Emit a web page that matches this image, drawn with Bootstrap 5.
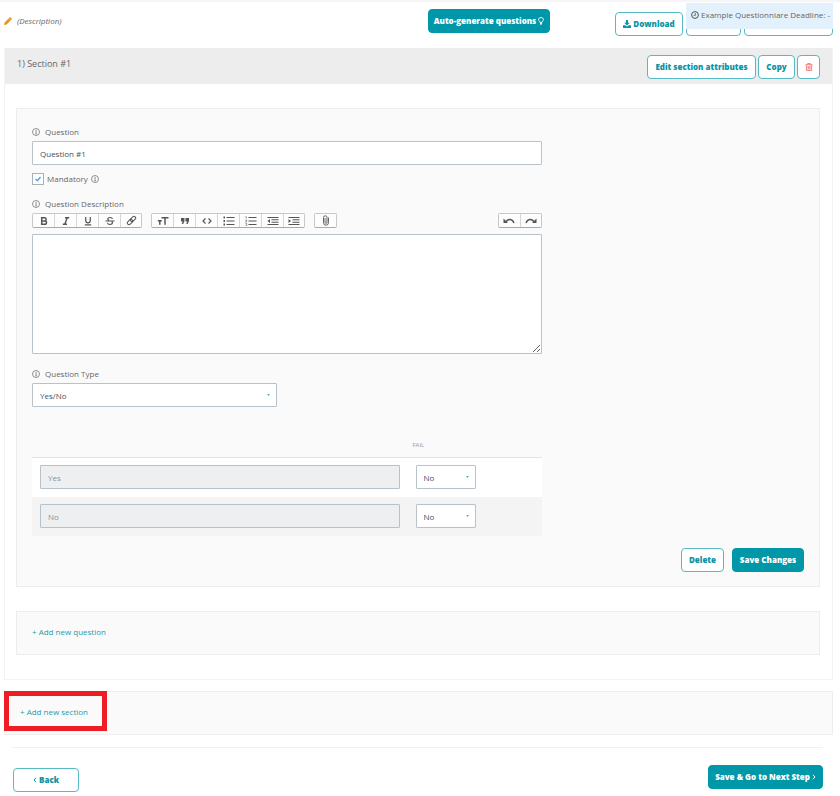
<!DOCTYPE html>
<html lang="en">
<head>
<meta charset="utf-8">
<meta name="viewport" content="width=device-width, initial-scale=1">
<title>Questionnaire editor</title>
<link href="https://cdn.jsdelivr.net/npm/bootstrap@5.3.0/dist/css/bootstrap.min.css" rel="stylesheet">
<style>
  :root { --teal: #0097a9; --field: #b8c2ca; --edge: #ededed; }
  body { font-family: "Open Sans", sans-serif; font-size: 8px; line-height: 12px; color: #555; background: #fff; border-top: 2px solid #f5f5f5; }
  svg { display: block; flex: none; }
  .page { padding: 0 7px 0 4px; }
  .page-head { height: 46px; padding-top: 7px; }
  .desc { height: 24px; padding-left: 0; gap: 5px; font-style: italic; color: #666; }
  .btn { --bs-btn-font-size: 8px; --bs-btn-line-height: 12px; --bs-btn-font-weight: 800; --bs-btn-border-radius: 4px; --bs-btn-padding-x: 7px; --bs-btn-padding-y: 0; height: 24px; display: inline-flex; align-items: center; justify-content: center; gap: 2px; white-space: nowrap; }
  .btn-teal { --bs-btn-color: #fff; --bs-btn-bg: var(--teal); --bs-btn-border-color: var(--teal); --bs-btn-hover-color: #fff; --bs-btn-hover-bg: #00808f; padding-left: 4px; padding-right: 4px; }
  .btn-line { --bs-btn-color: #0a94a5; --bs-btn-bg: #fff; --bs-btn-border-color: #55bac6; --bs-btn-hover-color: #fff; --bs-btn-hover-bg: var(--teal); }
  .w-auto-gen { width: 122px; margin-right: 65px; }
  .head-actions { gap: 3px; margin-top: 3px; }
  .w-dl { width: 68px; } .w-mid { width: 55px; } .w-wide { width: 89px; }
  .deadline { top: -9px; right: 0; width: 147px; height: 26px; background: #e3f1fd; gap: 2px; padding: 0 5px 2px; color: #666; white-space: nowrap; }
  .section-box { border: 1px solid #f3f3f3; border-top: 0; }
  .section-head { height: 36px; background: #ededed; padding: 0 12px; }
  .section-title { font-size: 9px; font-weight: 400; line-height: 12px; padding-top: 10px; color: #666; margin: 0; }
  .section-actions { gap: 2px; padding-top: 7px; }
  .w-edit { width: 109px; } .w-copy { width: 37px; } .w-bin { width: 23px; padding: 0; }
  .section-body { padding: 24px 12px 24px 11px; }
  .panel { background: #fafafa; border: 1px solid var(--edge); }
  .question { padding: 17px 15px 14px; }
  .fields { width: 66%; }
  .lbl { display: flex; align-items: center; gap: 5px; height: 12px; margin-bottom: 3px; color: #666; }
  .form-control, .form-select { font-size: 8px; line-height: 12px; height: 24px; padding: 1px 7px 0; border: 1px solid var(--field); border-radius: 1px; color: #44515c; background-color: #fff; }
  .form-control:disabled { background: #eeeff1; color: #8a929b; }
  .form-select { background-image: url("data:image/svg+xml,%3csvg xmlns='http://www.w3.org/2000/svg' viewBox='0 0 4 3'%3e%3cpath fill='%2339b0bd' d='M0 0h4L2 3z'/%3e%3c/svg%3e"); background-size: 3px 2px; background-position: right 6px center; padding-top: 2px; }
  .mand { gap: 3px; height: 12px; margin: 8px 0 13px; color: #666; }
  .form-check-input.tick { width: 12px; height: 12px; margin: 0; border: 1px solid #a9b0b6; border-radius: 0; flex: none; background-color: #fff; }
  .form-check-input.tick:checked { background-color: #fff; background-size: 8px; background-image: url("data:image/svg+xml,%3csvg xmlns='http://www.w3.org/2000/svg' viewBox='0 0 8 8'%3e%3cpath fill='none' stroke='%234aa3f0' stroke-width='1.4' d='M1.5 4l2 1.8L6.500 2'/%3e%3c/svg%3e"); border-color: #a9b0b6; }
  .tools { gap: 9px; margin-bottom: 6px; }
  .tool-group { display: flex; border: 1px solid #c8c8c8; border-bottom-color: #aaa; border-radius: 2px; background: #fdfdfd; }
  .tool-group button { width: 22px; height: 13px; padding: 0; border: 0; border-left: 1px solid #d6d6d6; background: none; display: flex; align-items: center; justify-content: center; color: #555; }
  .tool-group button:first-child { border-left: 0; }
  .tool-group button:first-child, .tool-group button:last-child { width: 21px; }
  textarea.form-control { height: 120px; min-height: 0; resize: vertical; margin-bottom: 14px; }
  .type-select { width: 245px; margin-bottom: 32px; }
  .answers { width: 100%; table-layout: fixed; margin-bottom: 12px; }
  .answers th { font-size: 6px; line-height: 12px; font-weight: 400; color: #999; padding: 0 5px 6px; }
  .answers tbody td { padding: 7px 8px; height: 39px; }
  .answers tbody tr:first-child { background: #fff; border-top: 1px solid #e2e2e2; }
  .answers tbody tr:last-child { background: #f4f4f4; }
  .col-answer { width: 73.7%; }
  .fail-select { width: 60px; }
  .w-del { width: 43px; } .w-save { width: 72px; }
  .add-row { height: 44px; padding: 0 15px 1px; }
  .add-row a { color: #1a9bab; text-decoration: none; }
  .add-question { margin-top: 24px; }
  .add-section { margin: 11px 0 12px; }
  .highlight { left: -1px; top: -1px; width: 103px; height: 40px; border: 5px solid #ee1c25; pointer-events: none; }
  .page-foot { margin: 0 10px 0 9px; border-top: 1px solid #f0f0f0; padding-top: 17px; }
  .w-back { width: 66px; margin-top: 3px; } .w-next { width: 115px; }
</style>
<script src="https://cdn.jsdelivr.net/npm/bootstrap@5.3.0/dist/js/bootstrap.bundle.min.js"></script>
</head>
<body>
<svg width="0" height="0" class="position-absolute" aria-hidden="true">
  <symbol id="info" viewBox="0 0 8 8"><circle cx="4" cy="4" r="3.500" fill="none" stroke="#777" stroke-width=".8"/><path d="M3.300 3.300H4.200V5.700M3.200 5.800H5" fill="none" stroke="#777" stroke-width=".7"/><circle cx="4.100" cy="2.200" r=".5" fill="#777"/></symbol>
</svg>
<main class="page">
  <header class="page-head d-flex align-items-start">
    <div class="desc d-flex align-items-center me-auto">
      <svg width="8" height="8" viewBox="0 0 8 8"><path d="M0 8l.6-2.600L5.600.5q.6-.6 1.200 0l.8.8q.5.600 0 1.100L2.600 7.400z" fill="#e8961e"/><path d="M4.800 1.400l1.900 1.900" stroke="#fff" stroke-width=".4"/></svg>
      <span>(Description)</span>
    </div>
    <button type="button" class="btn btn-teal w-auto-gen">Auto-generate questions
      <svg width="6" height="8" viewBox="0 0 6 8" fill="none" stroke="#fff" stroke-width=".9"><path d="M2 5.500Q2 4.700 1.300 4 .5 3.200.5 2.500.7.500 3 .500T5.500 2.500Q5.500 3.200 4.700 4 4 4.700 4 5.500zM2 6.500h2M2.400 7.500h1.200"/></svg>
    </button>
    <div class="head-actions d-flex position-relative">
      <button type="button" class="btn btn-line w-dl">
        <svg width="8" height="8" viewBox="0 0 8 8" fill="#0a94a5"><path d="M3 0h2v2.800h1.800L4 5.600 1.200 2.800H3z"/><path d="M0 5.200h2.300L4 6.700l1.700-1.500H8V8H0z"/></svg>
        Download</button>
      <button type="button" class="btn btn-line w-mid" aria-label="Preview"></button>
      <button type="button" class="btn btn-line w-wide" aria-label="More actions"></button>
      <div class="deadline position-absolute d-flex align-items-center">
        <svg width="8" height="8" viewBox="0 0 8 8" fill="none" stroke="#555"><circle cx="4" cy="4" r="3.400"/><path d="M4.300 2v2.400H2.600" stroke-width=".8"/></svg>
        <span>Example Questionniare Deadline: -</span>
      </div>
    </div>
  </header>

  <section class="section-box">
    <div class="section-head d-flex align-items-start justify-content-between">
      <h2 class="section-title">1) Section #1</h2>
      <div class="section-actions d-flex">
        <button type="button" class="btn btn-line w-edit">Edit section attributes</button>
        <button type="button" class="btn btn-line w-copy">Copy</button>
        <button type="button" class="btn btn-line w-bin" aria-label="Delete section">
          <svg width="8" height="8" viewBox="0 0 8 8" fill="none" stroke="#f07878" stroke-width=".9"><path d="M.5 1.700h7M2.700 1.500V.5h2.600v1M1.400 2v5.500h5.200V2M3 3v3.500M4 3v3.500M5 3v3.500"/></svg>
        </button>
      </div>
    </div>
    <div class="section-body">
      <form class="panel question">
        <div class="fields">
          <label class="lbl" for="q"><svg width="8" height="8"><use href="#info"/></svg>Question</label>
          <input id="q" class="form-control" type="text" value="Question #1">
          <div class="mand d-flex align-items-center">
            <input class="form-check-input tick" type="checkbox" id="mandatory" checked>
            <label for="mandatory">Mandatory</label>
            <svg width="8" height="8"><use href="#info"/></svg>
          </div>
          <label class="lbl" for="qd"><svg width="8" height="8"><use href="#info"/></svg>Question Description</label>
          <div class="tools d-flex" role="toolbar" aria-label="Formatting">
            <div class="tool-group">
              <button type="button" aria-label="Bold"><svg width="10" height="10" viewBox="0 0 10 10" fill="none" stroke="currentColor" stroke-width="1.500"><path d="M2.700 1.700h2.800q1.600 0 1.600 1.600T5.500 4.900H2.700zM2.700 4.900h3q1.800 0 1.800 1.700T5.700 8.300h-3z"/></svg></button>
              <button type="button" aria-label="Italic"><svg width="10" height="10" viewBox="0 0 10 10" fill="none" stroke="currentColor" stroke-width="1.400"><path d="M4 1.700h4.200M1.800 8.300H6M6.200 1.700L3.800 8.300"/></svg></button>
              <button type="button" aria-label="Underline"><svg width="10" height="10" viewBox="0 0 10 10" fill="none" stroke="currentColor" stroke-width="1.200"><path d="M2.700 1v3.500q0 2.300 2.300 2.300t2.300-2.300V1M1.800 8.800h6.400"/></svg></button>
              <button type="button" aria-label="Strikethrough"><svg width="10" height="10" viewBox="0 0 10 10" fill="none" stroke="currentColor" stroke-width="1.200"><path d="M7.400 3Q7.200 1.500 5 1.500T2.800 3.100Q2.800 4 4 4.500M.5 5h9M2.500 6.800Q2.700 8.500 5 8.500t2.400-1.700Q7.400 6 6.800 5.500"/></svg></button>
              <button type="button" aria-label="Link"><svg width="11" height="11" viewBox="0 0 11 11" fill="none" stroke="currentColor" stroke-width="1"><g transform="rotate(-45 5.500 5.500)"><rect x=".3" y="3.800" width="6" height="3.400" rx="1.700"/><rect x="4.700" y="3.800" width="6" height="3.400" rx="1.700"/></g></svg></button>
            </div>
            <div class="tool-group">
              <button type="button" aria-label="Heading"><svg width="12" height="10" viewBox="0 0 12 10" fill="none" stroke="currentColor" stroke-width="1.500"><path d="M4.500 1.700h7M8 1.700v7M.8 4.700h4M2.800 4.700v4"/></svg></button>
              <button type="button" aria-label="Quote"><svg width="10" height="10" viewBox="0 0 10 10" fill="currentColor"><path d="M1 2h3.500v3L3.200 8H1.700l1-2.500H1zM5.500 2H9v3L7.700 8H6.200l1-2.500H5.500z"/></svg></button>
              <button type="button" aria-label="Code"><svg width="10" height="10" viewBox="0 0 10 10" fill="none" stroke="currentColor" stroke-width="1.200"><path d="M3.500 2.500L1 5l2.500 2.500M6.500 2.500L9 5 6.500 7.500"/></svg></button>
              <button type="button" aria-label="Bullets"><svg width="12" height="10" viewBox="0 0 12 10" fill="none" stroke="currentColor" stroke-width="1.200"><path d="M.5 1.500H2M.5 5H2M.5 8.500H2" stroke-width="1.800"/><path d="M3.500 1.500h8M3.500 5h8M3.500 8.500h8"/></svg></button>
              <button type="button" aria-label="Numbers"><svg width="12" height="10" viewBox="0 0 12 10" fill="none" stroke="currentColor"><path d="M.5.700h.8v2M.5 4.200h1.500L.5 6H2M.5 7.500h1.200v2H.5" stroke-width=".6"/><path d="M3.500 1.500h8M3.500 5h8M3.500 8.500h8"/></svg></button>
              <button type="button" aria-label="Decrease level"><svg width="12" height="10" viewBox="0 0 12 10" fill="none" stroke="currentColor" stroke-width="1.100"><path d="M.5 1.500h11M4.500 3.800h7M4.500 6.200h7M.5 8.500h11"/><path d="M3 3v4L.5 5z" fill="currentColor" stroke="none"/></svg></button>
              <button type="button" aria-label="Increase level"><svg width="12" height="10" viewBox="0 0 12 10" fill="none" stroke="currentColor" stroke-width="1.100"><path d="M.5 1.500h11M4.500 3.800h7M4.500 6.200h7M.5 8.500h11"/><path d="M.5 3v4L3 5z" fill="currentColor" stroke="none"/></svg></button>
            </div>
            <div class="tool-group">
              <button type="button" aria-label="Attach file"><svg width="8" height="11" viewBox="0 0 8 11" fill="none" stroke="currentColor" stroke-width=".9"><path d="M6.500 2.500v5.200q0 2.500-2.500 2.500T1.500 7.700V2.500Q1.500.8 3.300.8T5 2.500v4.800q0 1-1 1t-1-1V3"/></svg></button>
            </div>
            <div class="tool-group ms-auto">
              <button type="button" aria-label="Undo"><svg width="12" height="10" viewBox="0 0 12 10"><path d="M3 5.500Q5 3 7.500 3.500T11 7" fill="none" stroke="currentColor" stroke-width="1.500"/><path d="M.5 2.500V7H5z" fill="currentColor"/></svg></button>
              <button type="button" aria-label="Redo"><svg width="12" height="10" viewBox="0 0 12 10"><path d="M9 5.500Q7 3 4.500 3.500T1 7" fill="none" stroke="currentColor" stroke-width="1.500"/><path d="M11.500 2.500V7H7z" fill="currentColor"/></svg></button>
            </div>
          </div>
          <textarea id="qd" class="form-control"></textarea>
          <label class="lbl" for="qt"><svg width="8" height="8"><use href="#info"/></svg>Question Type</label>
          <select id="qt" class="form-select type-select"><option>Yes/No</option></select>
          <table class="answers">
            <colgroup><col class="col-answer"><col></colgroup>
            <thead><tr><td></td><th scope="col">FAIL</th></tr></thead>
            <tbody>
              <tr><td><input class="form-control" type="text" value="Yes" disabled aria-label="Answer 1"></td>
                <td><select class="form-select fail-select" aria-label="Fail on answer 1"><option>No</option></select></td></tr>
              <tr><td><input class="form-control" type="text" value="No" disabled aria-label="Answer 2"></td>
                <td><select class="form-select fail-select" aria-label="Fail on answer 2"><option>No</option></select></td></tr>
            </tbody>
          </table>
        </div>
        <div class="d-flex justify-content-end gap-2">
          <button type="button" class="btn btn-line w-del">Delete</button>
          <button type="submit" class="btn btn-teal w-save">Save Changes</button>
        </div>
      </form>
      <div class="panel add-row add-question d-flex align-items-center"><a href="#">+ Add new question</a></div>
    </div>
  </section>

  <div class="panel add-row add-section d-flex align-items-center position-relative">
    <a href="#">+ Add new section</a>
    <div class="highlight position-absolute"></div>
  </div>

  <footer class="page-foot d-flex justify-content-between align-items-start">
    <button type="button" class="btn btn-line w-back"><svg width="4" height="6" viewBox="0 0 4 6" fill="none" stroke="currentColor"><path d="M3 .8L1 3l2 2.200"/></svg>Back</button>
    <button type="button" class="btn btn-teal w-next">Save &amp; Go to Next Step<svg width="4" height="6" viewBox="0 0 4 6" fill="none" stroke="currentColor"><path d="M1 .8L3 3 1 5.200"/></svg></button>
  </footer>
</main>
</body>
</html>
